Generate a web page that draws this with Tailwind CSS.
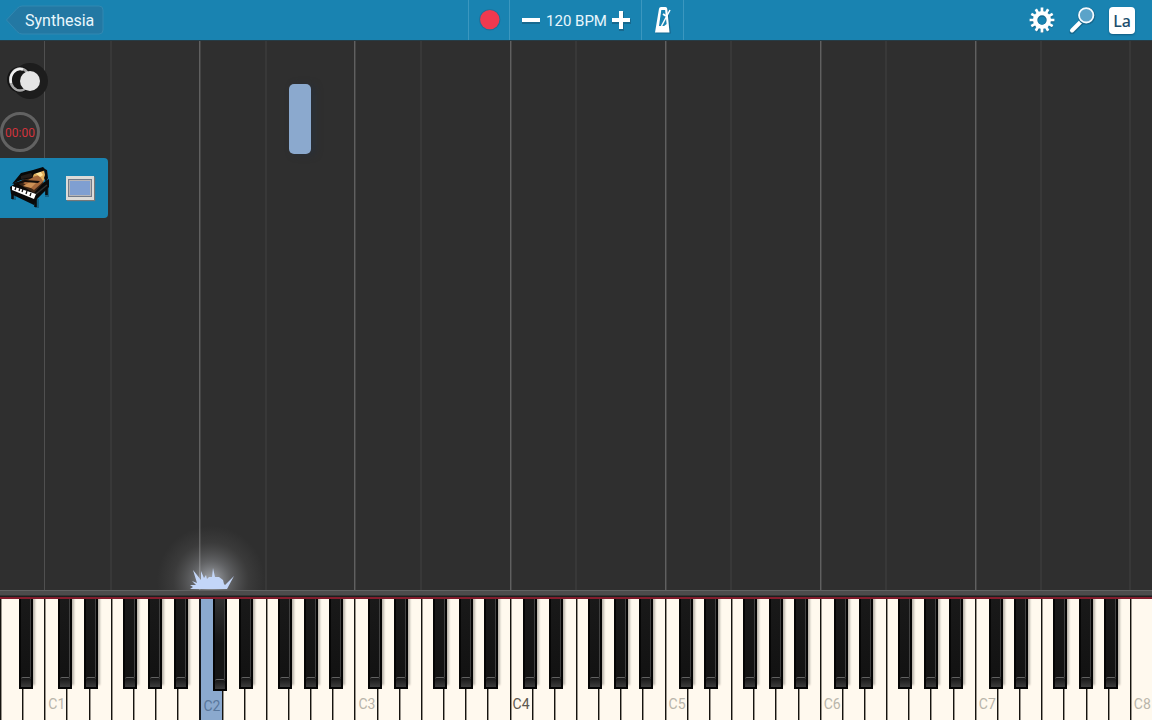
<!DOCTYPE html>
<html lang="en">
<head>
<meta charset="utf-8">
<title>Synthesia</title>
<script src="https://cdn.jsdelivr.net/npm/@tailwindcss/browser@4"></script>
</head>
<body class="flex h-screen flex-col overflow-hidden bg-[#2f2f2f] font-['Roboto',sans-serif]">

<header class="grid h-10 shrink-0 grid-cols-[1fr_auto_1fr] items-center bg-[#1983b1] text-[#e9f7fd]">
  <div class="flex pl-1">
    <button class="relative flex h-8 w-[102px] items-center pl-[21px] text-[16px] leading-5">
      <svg class="absolute inset-0" width="102" height="32" viewBox="0 0 102 32" fill="none">
        <path d="M2.500 16 L13 4.500 Q15.500 2 18 2 H95 Q99 2 99 6 V26 Q99 30 95 30 H18 Q15.500 30 13 27.500 Z" fill="#2378a3" stroke="#3288b1"/>
      </svg>
      <span class="relative pt-0.5">Synthesia</span>
    </button>
  </div>
  <div class="flex h-10 items-stretch border-x border-[#3b97bf]">
    <button class="flex w-10 items-center justify-center" aria-label="Record">
      <svg width="24" height="24" viewBox="0 0 24 24"><circle cx="12.800" cy="11.800" r="10.600" fill="#1f6e98"/><circle cx="12.800" cy="11.600" r="9.700" fill="#f0394f"/></svg>
    </button>
    <div class="flex w-[133px] items-center justify-center gap-1 border-x border-[#3b97bf]">
      <button aria-label="Slower"><svg width="22" height="24" viewBox="0 0 22 24"><path d="M2 11h18v5H2z" fill="#17698f"/><path d="M2 10h18v4H2z" fill="#fff"/></svg></button>
      <span class="pt-0.5 text-[15px] leading-5 whitespace-nowrap">120 BPM</span>
      <button aria-label="Faster"><svg width="20" height="24" viewBox="0 0 20 24"><path d="M1 11h7v-7h5v7h7v5h-7v7h-5v-7h-7z" fill="#17698f"/><path d="M1 10h7V3h4v7h7v4h-7v7H8v-7H1z" fill="#fff"/></svg></button>
    </div>
    <button class="flex w-[41px] items-center justify-center" aria-label="Metronome">
      <svg width="20" height="30" viewBox="0 0 20 30">
        <path d="M2.500 28.500 6.500 4Q7 2.500 8.500 2.500h4.500Q14.500 2.500 15 4l3 24.500z" fill="#176a92"/>
        <path d="M2 27.500 6 3.800Q6.300 2 8 2h4.500Q14 2 14.300 3.800l2.200 23.700z" fill="#fff"/>
        <path d="M8.300 5h3.800l1.500 14-2.500 2H6z" fill="#1983b1"/>
        <path d="M17 5 8.500 21" stroke="#fff" stroke-width="1.500"/><path d="m10 9 3 2" stroke="#fff" stroke-width="2"/>
      </svg>
    </button>
  </div>
  <div class="flex items-center justify-end gap-3 pr-[17px]">
    <button aria-label="Settings">
      <svg width="28" height="28" viewBox="-13 -14 28 28">
        <g stroke="#17698f" stroke-width="3" transform="translate(.5 1)"><path d="M0-12V12M-12 0H12M-10.400-6 10.400 6M-10.400 6 10.400-6M-6-10.400 6 10.400M-6 10.400 6-10.400"/></g>
        <path d="M0-12.400V12.400M-12.400 0H12.400M-10.700-6.200 10.700 6.200M-10.700 6.200 10.700-6.200M-6.200-10.700 6.200 10.700M-6.200 10.700 6.200-10.700" stroke="#fff" stroke-width="2.700"/>
        <circle r="9" fill="#fff"/><circle r="4.700" fill="#17698f"/><circle cy=".6" r="3.900" fill="#1983b1"/>
      </svg>
    </button>
    <button aria-label="Search">
      <svg width="28" height="28" viewBox="0 0 28 28">
        <path d="m3 26 9-9" stroke="#17698f" stroke-width="5" stroke-linecap="round"/>
        <path d="m3 24.500 9-9" stroke="#fff" stroke-width="4" stroke-linecap="round"/>
        <circle cx="17.500" cy="9.800" r="8" fill="none" stroke="#17698f" stroke-width="2"/>
        <circle cx="17.200" cy="9.300" r="7.200" fill="#5ba3c9" stroke="#f4fbff" stroke-width="1.800"/>
      </svg>
    </button>
    <button class="flex h-[27px] w-[26px] items-end justify-center rounded-sm bg-white pb-0.5 font-['Noto_Sans',sans-serif] text-base leading-[22px] font-medium text-[#1d4e6d] shadow-[0_1px_2px_#125c80]">La</button>
  </div>
</header>

<main class="relative min-h-0 flex-1 border-t border-[#263c46]">
  <div id="lanes" aria-hidden="true"></div>

  <div class="absolute top-[43px] left-[25.080%] h-[70px] w-[22px] rounded-[5px] bg-[#8ba9ce] shadow-[4px_1px_7px_#292f38]"></div>

  <div class="absolute top-[22px] left-0 flex w-[108px] flex-col">
    <button class="h-10 w-12" aria-label="Toggle hands">
      <svg width="48" height="40" viewBox="0 0 48 40">
        <circle cx="30" cy="18" r="18" fill="#1d1d1d"/><circle cx="20" cy="16.500" r="13" fill="#141414"/>
        <ellipse cx="20" cy="16.500" rx="9.600" ry="11" fill="#171717" stroke="#a8a8a8" stroke-width="2.500"/>
        <path d="M11 20a9.600 11 0 0 1 12-13.500" stroke="#f0f0f0" stroke-width="2.500" fill="none"/>
        <circle cx="30" cy="18" r="10" fill="#e5e5e5"/>
      </svg>
    </button>
    <div class="mt-[9px] flex h-10 w-10 items-center justify-center rounded-full border-[3px] border-[#626262] pt-0.5 text-xs leading-4 text-[#d2343d]">00:00</div>
    <div class="mt-[6px] flex h-[60px] items-center gap-[14px] rounded-r bg-[#1983b1] pl-2">
      <button aria-label="Grand piano">
        <svg width="44" height="44" viewBox="0 0 44 44">
          <path d="M6 29v5M29 33v9M39 19v12" stroke="#156183" stroke-width="4"/>
          <path d="M4.500 24v9M27.500 32v9M38.500 16v13" stroke="#0b0b0b" stroke-width="2.600"/>
          <path d="m2 21 6-4 19 5 14-9v8L28 34l-2 5L3 28z" fill="#090909"/>
          <path d="m9 17 23-13 3 2v11L26 27z" fill="#3b2516"/>
          <path d="m15 17 12-7 7-4 2 9-10 9z" fill="#a5683b"/>
          <path d="m24 6 11-3 4 8-4 4-4-6-6 2z" fill="#e0ad5b"/>
          <path d="m27 7 5-2 3 4-3 2z" fill="#ffe39a"/>
          <path d="m24 15 4 2-5 5-8-2z" fill="#cc9055"/>
          <path d="m4 18 9-11L25 4l10-3 3 3-12 4-2 4-11 2z" fill="#080808"/>
          <path d="m5 17 12-3 15 1-2 2-13-1-10 3z" fill="#100c0a"/>
          <path d="m13 10 10-3 2 4-12 2z" fill="#241c18"/>
          <path d="m36 3 3 1 1 8-2 4-2-4 1-3z" fill="#0a0a0a"/>
          <path d="m4 20 24 8-2 5L4 24z" fill="#fff"/>
          <path d="m8 21-1 3m5-2-1 3m4-2-1 3m5-1-1 3m5-1-1 3" stroke="#111" stroke-width="1.300"/>
          <path d="m28 28 11-9" stroke="#303030" stroke-width="1.500"/>
        </svg>
      </button>
      <button class="flex h-6 w-7 items-center justify-center bg-[#dcdbd8] shadow-[1px_1px_1px_#777]" aria-label="Track color"><span class="h-[18px] w-6 border border-[#737b89] bg-[#7f9fd1] ring-1 ring-[#b5b5b8] ring-inset"></span></button>
    </div>
  </div>

  <svg class="absolute bottom-0 left-[13.020%]" width="120" height="76" viewBox="0 0 120 76" aria-hidden="true">
    <defs><radialGradient id="glow" gradientUnits="userSpaceOnUse" cx="61" cy="66" r="54"><stop offset="0" stop-color="#dce1ea" stop-opacity=".7"/><stop offset=".35" stop-color="#b9bcc2" stop-opacity=".36"/><stop offset=".7" stop-color="#909090" stop-opacity=".12"/><stop offset="1" stop-color="#888" stop-opacity="0"/></radialGradient></defs>
    <path d="M0 0h120v76H0z" fill="url(#glow)"/>
    <path d="m40 75 3-2-3-2 6 0-4-4 5 2-4-13 8 10 0-9 3 7 2-3 1 4 2-2 3 0 1-9 2 9 4 0 4 3 1 4 1 1 9-9-7 13z" fill="#c3d6f8"/>
  </svg>
</main>

<div class="h-[9px] shrink-0 border-t border-[#626262] border-b-2 border-b-[#831d2d] bg-linear-to-b from-[#4c4c4c] from-60% to-[#141414]"></div>
<section id="keyboard" class="relative grid h-[121px] shrink-0 auto-cols-[minmax(0,1fr)] grid-flow-col overflow-hidden bg-[#fff9ee]" aria-label="Piano keyboard"></section>

<script>
  const WHITE = 52;
  const lanes = document.getElementById('lanes');
  const keyboard = document.getElementById('keyboard');
  const pct = n => (n / WHITE * 100).toFixed(3) + '%';
  const names = ['C', 'D', 'E', 'F', 'G', 'A', 'B'];

  for (let i = 0; i < WHITE; i++) {
    const step = (i + 5) % 7;
    const octave = Math.floor((i + 5) / 7);
    const name = names[step];
    if (i > 0 && (name === 'C' || name === 'F')) {
      const line = document.createElement('div');
      line.className = name === 'F' || i === 51
        ? 'absolute inset-y-0 -ml-px w-0.5 bg-[#383838]'
        : i === 2
          ? 'absolute inset-y-0 w-px bg-[#505050]'
          : 'absolute inset-y-0 w-0.5 border-r border-[#444] bg-[#606060]';
      line.style.left = pct(i);
      lanes.append(line);
    }
    const key = document.createElement('button');
    const active = name === 'C' && octave === 2;
    key.className = active
      ? 'flex items-end border-l-2 border-[#15171b] bg-[#8ba9ce] pb-1.5 pl-0.5 text-sm leading-4 text-[#59779c]'
      : octave === 4
        ? 'flex items-end border-l border-[#15130f] pb-2 pl-0.5 text-sm leading-4 text-[#5c5850] shadow-[inset_1px_0_#99948b]'
        : 'flex items-end border-l border-[#15130f] pb-2 pl-[3px] text-sm leading-4 text-[#b9b5aa] shadow-[inset_1px_0_#99948b]';
    key.setAttribute('aria-label', name + octave);
    if (name === 'C') key.textContent = name + octave;
    keyboard.append(key);
  }

  /* Left edge of each black key, in white-key widths from the octave's C. */
  const offsets = [0.63, 1.79, 3.55, 4.70, 5.85];
  for (let octave = 0; octave < 8; octave++) {
    offsets.forEach((offset, n) => {
      const at = octave * 7 - 5 + offset;
      if (at < 0) return;
      const key = document.createElement('button');
      key.className = octave === 2 && n === 0
        ? 'absolute top-0 flex h-[92px] w-[14px] flex-col justify-end border-x-2 border-b-2 border-[#050505] bg-linear-to-b from-[#323232] to-[#151515] to-50%'
        : 'absolute top-0 flex h-[90px] w-[14px] flex-col justify-end border-x-2 border-b-2 border-[#050505] bg-linear-to-b from-[#191919] to-[#111] shadow-[2px_-4px_2px_#b9b3aa]';
      key.style.left = pct(at);
      key.setAttribute('aria-label', 'Black key ' + (n + 1) + ', octave ' + octave);
      key.innerHTML = '<span class="w-full flex-1 border-r border-[#414141]"></span><span class="h-[10px] w-full rounded-t-xs border-t border-[#626262] bg-linear-to-b from-[#181818] to-[#3d3d3d]"></span>';
      keyboard.append(key);
    });
  }
</script>
</body>
</html>
